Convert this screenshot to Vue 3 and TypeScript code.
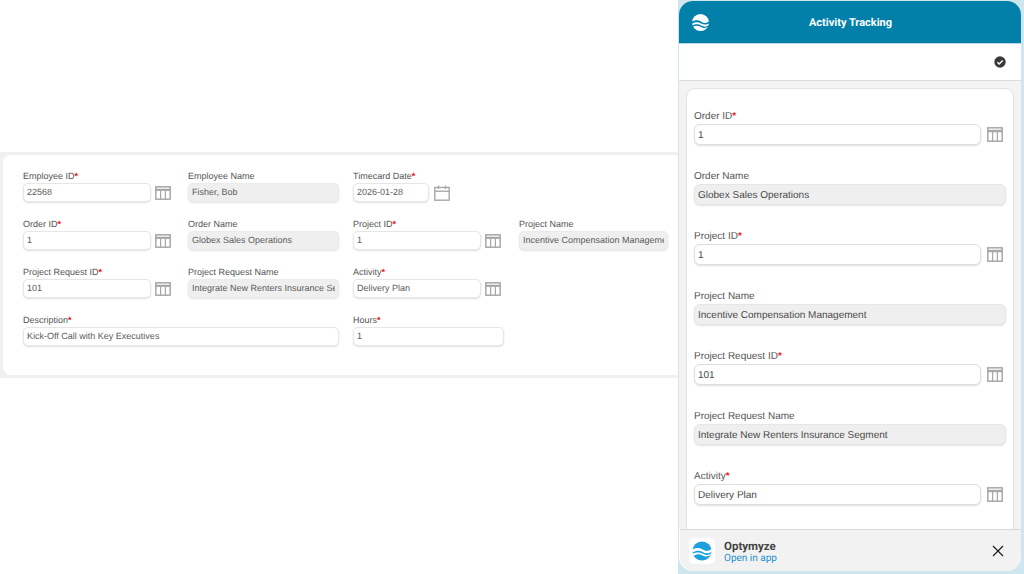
<script setup lang="ts">
interface Field {
  label: string
  value?: string
  req?: boolean
  kind?: 'lookup' | 'date' | 'readonly' | 'wide' | 'hours' | 'empty'
}

const desktopFields: Field[] = [
  { label: 'Employee ID', value: '22568', req: true, kind: 'lookup' },
  { label: 'Employee Name', value: 'Fisher, Bob', kind: 'readonly' },
  { label: 'Timecard Date', value: '2026-01-28', req: true, kind: 'date' },
  { label: '', kind: 'empty' },
  { label: 'Order ID', value: '1', req: true, kind: 'lookup' },
  { label: 'Order Name', value: 'Globex Sales Operations', kind: 'readonly' },
  { label: 'Project ID', value: '1', req: true, kind: 'lookup' },
  { label: 'Project Name', value: 'Incentive Compensation Management', kind: 'readonly' },
  { label: 'Project Request ID', value: '101', req: true, kind: 'lookup' },
  { label: 'Project Request Name', value: 'Integrate New Renters Insurance Segment', kind: 'readonly' },
  { label: 'Activity', value: 'Delivery Plan', req: true, kind: 'lookup' },
  { label: '', kind: 'empty' },
  { label: 'Description', value: 'Kick-Off Call with Key Executives', req: true, kind: 'wide' },
  { label: 'Hours', value: '1', req: true, kind: 'hours' }
]

const mobileFields: Field[] = [
  { label: 'Order ID', value: '1', req: true, kind: 'lookup' },
  { label: 'Order Name', value: 'Globex Sales Operations', kind: 'readonly' },
  { label: 'Project ID', value: '1', req: true, kind: 'lookup' },
  { label: 'Project Name', value: 'Incentive Compensation Management', kind: 'readonly' },
  { label: 'Project Request ID', value: '101', req: true, kind: 'lookup' },
  { label: 'Project Request Name', value: 'Integrate New Renters Insurance Segment', kind: 'readonly' },
  { label: 'Activity', value: 'Delivery Plan', req: true, kind: 'lookup' }
]
</script>

<template>
  <div class="page">
    <section class="desktop">
      <div class="band">
        <div class="card">
          <div class="grid">
            <div
              v-for="(f, i) in desktopFields"
              :key="i"
              class="field"
              :class="f.kind"
            >
              <template v-if="f.kind !== 'empty'">
                <div class="label">{{ f.label }}<span v-if="f.req" class="req">*</span></div>
                <div class="row">
                  <div class="input" :class="{ ro: f.kind === 'readonly' }"><span class="val">{{ f.value }}</span></div>
                  <svg v-if="f.kind === 'lookup'" class="ico" viewBox="0 0 16 14" fill="none" stroke="#a8a8a8">
                    <rect x="0.8" y="0.8" width="14.4" height="12.4" stroke-width="1.5" />
                    <path d="M0.8 3.8H15.2" stroke-width="2.2" />
                    <path d="M5.6 4V13M10.4 4V13" stroke-width="1.3" />
                  </svg>
                  <svg v-if="f.kind === 'date'" class="ico cal" viewBox="0 0 16 16" fill="none" stroke="#a8a8a8">
                    <rect x="0.8" y="2.5" width="14.4" height="12.7" stroke-width="1.4" />
                    <path d="M0.8 6.2H15.2" stroke-width="1.4" />
                    <path d="M4.5 0.5V4M11.5 0.5V4" stroke-width="1.4" />
                  </svg>
                </div>
              </template>
            </div>
          </div>
        </div>
      </div>
    </section>

    <section class="phone">
      <div class="shell">
        <header class="head">
          <svg class="logo-head" viewBox="0 0 20 20">
            <circle cx="10" cy="10" r="9" fill="#fff" />
            <path d="M0.5 9.5C4.5 6.8 8 7.4 10.8 9.2C13.6 11 16 11 19.5 8.6V10.4C16.4 12.8 13.4 12.6 10.6 11C7.8 9.4 4.5 9 0.5 11.6Z" fill="#0280aa" />
            <path d="M0.5 13.6C4.5 11 8 11.6 10.8 13.2C13.6 14.8 15.8 14.8 18.6 13V14C15.8 16.2 13.2 16.2 10.6 14.8C7.8 13.2 4.5 13 1.4 15Z" fill="#0280aa" />
          </svg>
          <h1 class="title">Activity Tracking</h1>
        </header>
        <div class="toolbar">
          <svg class="check" viewBox="0 0 12 12">
            <circle cx="6" cy="6" r="5.7" fill="#3a3a3a" />
            <path d="M3.4 6.2L5.2 8L8.7 4.4" fill="none" stroke="#fff" stroke-width="1.4" />
          </svg>
        </div>
        <div class="scroll">
          <div class="mcard">
            <div v-for="f in mobileFields" :key="f.label" class="mfield">
              <div class="mlabel">{{ f.label }}<span v-if="f.req" class="req">*</span></div>
              <div class="mrow">
                <div class="minput" :class="{ ro: f.kind === 'readonly' }">{{ f.value }}</div>
                <svg v-if="f.kind === 'lookup'" class="mico" viewBox="0 0 16 15" fill="none" stroke="#a8a8a8">
                  <rect x="0.8" y="0.8" width="14.4" height="13.4" stroke-width="1.5" />
                  <path d="M0.8 4H15.2" stroke-width="2.4" />
                  <path d="M5.6 4V14M10.4 4V14" stroke-width="1.3" />
                </svg>
              </div>
            </div>
          </div>
        </div>
        <footer class="banner">
          <div class="tile">
            <svg viewBox="0 0 20 20" class="tile-logo">
              <circle cx="10" cy="10" r="9.6" fill="#1ea0de" />
              <path d="M0 8.8C4.5 6 8 6.8 10.8 8.6C13.6 10.4 16 10.4 20 8V10.4C16.4 12.8 13.4 12.6 10.6 11C7.8 9.4 4.5 9 0.4 11.8Z" fill="#fff" />
              <path d="M0.6 13C4.5 10.6 8 11.2 10.8 12.8C13.6 14.4 15.8 14.4 19 12.4V13.6C15.8 16 13.2 16 10.6 14.6C7.8 13 4.5 12.8 1.6 15Z" fill="#fff" />
            </svg>
          </div>
          <div class="promo">
            <div class="brand">Optymyze</div>
            <div class="open">Open in app</div>
          </div>
          <svg class="close" viewBox="0 0 12 12" fill="none" stroke="#1c1c1c" stroke-width="1.2">
            <path d="M1 1L11 11M11 1L1 11" />
          </svg>
        </footer>
      </div>
    </section>
  </div>
</template>

<style>
html, body { margin: 0; background: #fff; }
</style>

<style scoped>
.page {
  width: 1024px;
  height: 574px;
  display: flex;
  overflow: hidden;
  font-family: "Liberation Sans", Arial, sans-serif;
  text-rendering: geometricPrecision;
  color: #555;
}
.desktop {
  width: 678px;
  flex: none;
  padding-top: 152px;
  box-sizing: border-box;
}
.band {
  background: #f0f0f0;
  padding: 3px 0 3px 3px;
  height: 226px;
  box-sizing: border-box;
}
.card {
  height: 220px;
  background: #fff;
  border-radius: 8px 0 0 8px;
  padding: 15px 0 0 20px;
  box-sizing: border-box;
}
.grid {
  display: grid;
  grid-template-columns: 165px 165px 166px 149px;
  grid-auto-rows: 48px;
}
.field { min-width: 0; }
.label {
  font-size: 9px;
  line-height: 13px;
  height: 13px;
  color: #555;
}
.req { color: #f01018; font-weight: 700; }
.row {
  display: flex;
  align-items: center;
  gap: 4px;
}
.input {
  height: 19px;
  box-sizing: border-box;
  background: #fff;
  border: 1px solid #e6e6e6;
  border-radius: 5px;
  box-shadow: 0 1px 2px rgba(0, 0, 0, 0.12);
  font-size: 9px;
  line-height: 17px;
  padding: 0 3px;
  white-space: nowrap;
  overflow: hidden;
  color: #5c5c5c;
}
.input.ro { background: #efefef; border-color: #ebebeb; }
.val { display: block; overflow: hidden; }
.lookup .input { width: 128px; }
.readonly .input { width: 151px; }
.date .input { width: 76px; }
.wide { grid-column: span 2; }
.wide .input { width: 316px; }
.hours .input { width: 151px; }
.ico { width: 16px; height: 14px; flex: none; }
.cal { height: 16px; margin-left: 1px; }

.phone {
  flex: 1;
  background: #cfe6ee;
  padding: 1px 3px 3px 1px;
  box-sizing: border-box;
  min-width: 0;
}
.shell {
  height: 100%;
  display: flex;
  flex-direction: column;
  background: #fff;
  border-radius: 14px;
  overflow: hidden;
}
.head {
  height: 43px;
  flex: none;
  background: #0280aa;
  border-bottom: 1px solid #b5d6e2;
  box-sizing: border-box;
  display: flex;
  align-items: center;
  justify-content: center;
  position: relative;
}
.logo-head {
  position: absolute;
  left: 12px;
  top: 12px;
  width: 19px;
  height: 19px;
}
.title {
  margin: 0 0 0 1px;
  font-family: Roboto, sans-serif;
  font-size: 11px;
  font-weight: 700;
  color: #fff;
}
.toolbar {
  height: 37px;
  flex: none;
  background: #fff;
  border-bottom: 1px solid #dcdcdc;
  box-sizing: border-box;
  display: flex;
  align-items: center;
  justify-content: flex-end;
  padding-right: 15px;
}
.check { width: 12px; height: 12px; }
.scroll {
  flex: 1;
  min-height: 0;
  overflow: hidden;
  background: #f3f3f3;
  padding: 7px 7px 0 7px;
  box-sizing: border-box;
}
.mcard {
  background: #fff;
  border: 1px solid #e2e2e2;
  border-radius: 9px;
  padding: 20px 7px 40px 7px;
}
.mfield { height: 60px; }
.mlabel {
  font-size: 10px;
  line-height: 15px;
  height: 15px;
  color: #555;
}
.mrow {
  display: flex;
  align-items: center;
  gap: 6px;
}
.minput {
  flex: 1;
  height: 21px;
  box-sizing: border-box;
  background: #fff;
  border: 1px solid #dedede;
  border-radius: 6px;
  box-shadow: 0 1px 2px rgba(0, 0, 0, 0.12);
  font-size: 10px;
  line-height: 21px;
  padding: 0 3px;
  white-space: nowrap;
  overflow: hidden;
  color: #4a4a4a;
}
.minput.ro { background: #efefef; border-color: #e6e6e6; }
.mico { width: 16px; height: 15px; flex: none; margin-right: 3px; }
.banner {
  height: 42px;
  flex: none;
  background: #f2f2f2;
  border-top: 1px solid #d8d8d8;
  box-sizing: border-box;
  display: flex;
  align-items: center;
  padding: 0 17px 0 9px;
  margin: 0 0 0 1px;
  border-radius: 0 0 14px 14px;
}
.tile {
  width: 26px;
  height: 26px;
  background: #fff;
  border-radius: 5px;
  display: flex;
  align-items: center;
  justify-content: center;
  flex: none;
}
.tile-logo { width: 20px; height: 20px; }
.promo { margin-left: 9px; flex: 1; padding-top: 2px; }
.brand {
  font-family: Roboto, sans-serif;
  font-size: 11.5px;
  font-weight: 700;
  line-height: 14px;
  color: #444;
}
.open {
  font-family: Roboto, sans-serif;
  font-size: 10px;
  line-height: 12px;
  color: #1a8fd0;
}
.close { width: 12px; height: 12px; flex: none; }
</style>
